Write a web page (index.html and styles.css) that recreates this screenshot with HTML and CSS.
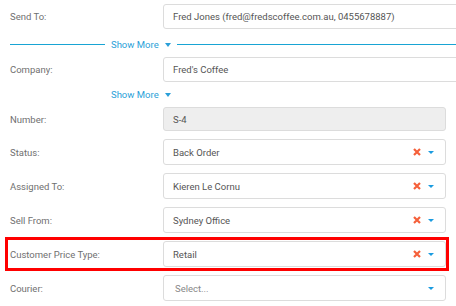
FILE: index.html
```html
<!DOCTYPE html>
<html lang="en">

<head>
    <meta charset="UTF-8">
    <meta name="viewport" content="width=device-width, initial-scale=1.0">
    <title>Sale Details</title>
    <link rel="stylesheet" href="styles.css">
</head>

<body>
    <form class="details">
        <div class="row row-top">
            <label class="label">Send To:</label>
            <div class="box box-wide">Fred Jones (fred@fredscoffee.com.au, 0455678887)</div>
        </div>

        <div class="divider">
            <span class="line line-left"></span>
            <a class="more">Show More <span class="caret"></span></a>
            <span class="line line-right"></span>
        </div>

        <div class="row row-flush">
            <label class="label">Company:</label>
            <div class="box box-wide">Fred's Coffee</div>
        </div>

        <div class="more-plain">
            <a class="more">Show More <span class="caret"></span></a>
        </div>

        <div class="row row-flush">
            <label class="label">Number:</label>
            <div class="box box-readonly">S-4</div>
        </div>

        <div class="row">
            <label class="label">Status:</label>
            <div class="box select">
                <span class="value">Back Order</span>
                <span class="clear"><svg width="8" height="8" viewBox="0 0 8 8"><path d="M1 1L7 7M7 1L1 7" /></svg></span>
                <span class="drop"></span>
            </div>
        </div>

        <div class="row">
            <label class="label">Assigned To:</label>
            <div class="box select">
                <span class="value">Kieren Le Cornu</span>
                <span class="clear"><svg width="8" height="8" viewBox="0 0 8 8"><path d="M1 1L7 7M7 1L1 7" /></svg></span>
                <span class="drop"></span>
            </div>
        </div>

        <div class="row">
            <label class="label">Sell From:</label>
            <div class="box select">
                <span class="value">Sydney Office</span>
                <span class="clear"><svg width="8" height="8" viewBox="0 0 8 8"><path d="M1 1L7 7M7 1L1 7" /></svg></span>
                <span class="drop"></span>
            </div>
        </div>

        <div class="row highlighted">
            <label class="label">Customer Price Type:</label>
            <div class="box select">
                <span class="value">Retail</span>
                <span class="clear"><svg width="8" height="8" viewBox="0 0 8 8"><path d="M1 1L7 7M7 1L1 7" /></svg></span>
                <span class="drop"></span>
            </div>
        </div>

        <div class="row">
            <label class="label">Courier:</label>
            <div class="box select">
                <span class="value placeholder">Select...</span>
                <span class="drop"></span>
            </div>
        </div>
    </form>
</body>

</html>
```

FILE: styles.css
```css
* {
    padding: 0;
    margin: 0;
    box-sizing: border-box;
}

body {
    background: #fff;
    font-family: Roboto, "Liberation Sans", sans-serif;
    font-size: 9.5px;
    color: #666;
    overflow: hidden;
}

.details {
    width: 456px;
}

.row {
    position: relative;
    display: grid;
    grid-template-columns: 163px 283px;
    align-items: center;
    margin-top: 8px;
}

.row-top {
    margin-top: 4px;
}

.row-flush {
    margin-top: 0;
}

.label {
    padding-left: 10px;
    color: #707070;
}

.box {
    display: flex;
    align-items: center;
    height: 26px;
    padding: 0 9px;
    border: 1px solid #dcdcdc;
    border-radius: 3px;
    background: #fff;
    color: #555;
    white-space: nowrap;
}

.box-wide {
    width: 320px;
    height: 25px;
}

.box-readonly {
    height: 24px;
    background: #eee;
}

.select .value {
    flex: 1;
}

.placeholder {
    color: #888;
    padding-left: 2px;
}

.clear svg {
    display: block;
    stroke: #f5603a;
    stroke-width: 2.2;
}

.drop {
    width: 0;
    height: 0;
    margin-left: 7px;
    margin-right: 2px;
    border-left: 3px solid transparent;
    border-right: 3px solid transparent;
    border-top: 3px solid #1a9be0;
}

.divider {
    display: flex;
    align-items: center;
    height: 28px;
    padding-top: 3px;
    padding-left: 10px;
}

.line {
    height: 1px;
    background: #18a4d4;
}

.line-left {
    width: 95px;
}

.line-right {
    flex: 1;
    margin-left: 6px;
}

.more {
    display: flex;
    align-items: center;
    margin-left: 6px;
    color: #2a9fd8;
}

.caret {
    width: 0;
    height: 0;
    margin-left: 6px;
    border-left: 3.5px solid transparent;
    border-right: 3.5px solid transparent;
    border-top: 4px solid #2a9fd8;
}

.more-plain {
    display: flex;
    height: 25px;
    align-items: center;
    padding-left: 105px;
}

.highlighted::after {
    content: "";
    position: absolute;
    top: -4px;
    bottom: -4px;
    left: 5px;
    right: 7px;
    border: 3px solid #f00;
}
```
